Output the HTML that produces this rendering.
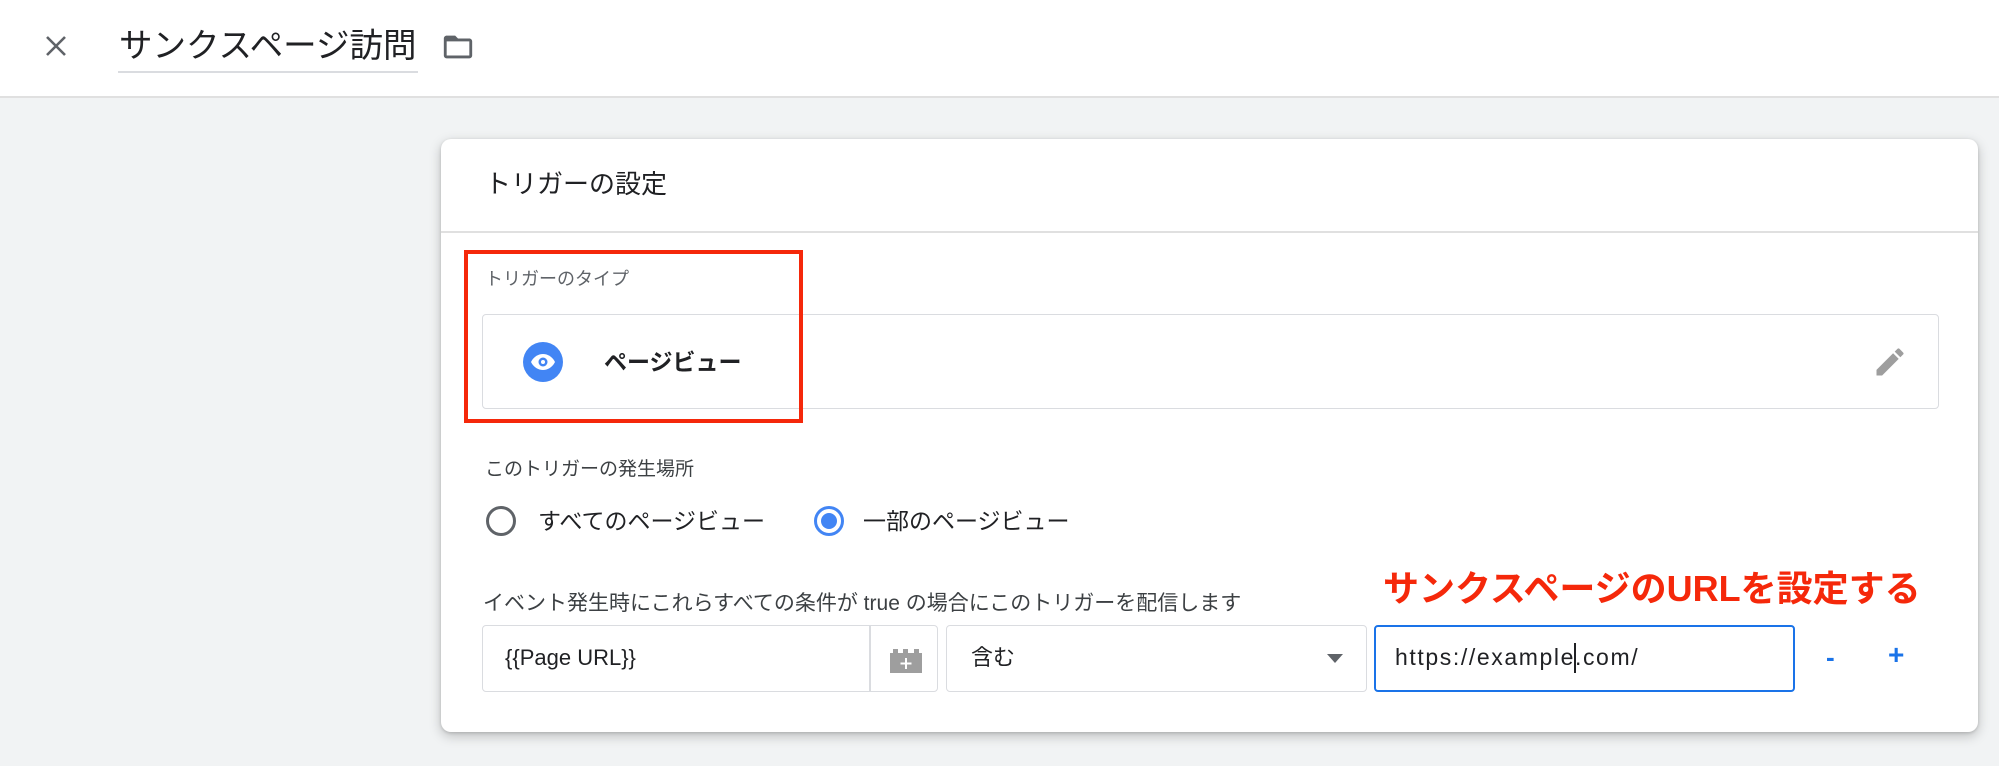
<!DOCTYPE html>
<html><head><meta charset="utf-8"><style>
*{box-sizing:border-box;margin:0;padding:0}
body{width:1999px;height:766px;background:#f1f3f4;font-family:"Liberation Sans","Noto Sans CJK JP",sans-serif;color:#202124;position:relative;overflow:hidden}
.abs{position:absolute}
.hdr{left:0;top:0;width:1999px;height:98px;background:#fff;border-bottom:2px solid #e0e0e0}
.card{left:441px;top:139px;width:1537px;height:593px;background:#fff;border-radius:10px;box-shadow:0 4px 12px rgba(0,0,0,.22),0 1px 3px rgba(0,0,0,.15)}
.box{border:1.5px solid #dadce0;border-radius:4px;background:#fff}
</style></head><body>
<div class="abs hdr"></div>
<svg class="abs" style="left:44px;top:34px" width="24" height="24" viewBox="0 0 24 24"><path d="M3 3L21 21M21 3L3 21" stroke="#5f6368" stroke-width="2.6"/></svg>
<div class="abs" style="left:119px;top:25px;font-size:33.5px;line-height:44px;color:#202124">サンクスページ訪問</div>
<div class="abs" style="left:118px;top:71px;width:300px;height:2px;background:#dadce0"></div>
<svg class="abs" style="left:440px;top:30px" width="36" height="34" viewBox="0 0 24 24"><path d="M10 4H4c-1.1 0-2 .9-2 2v12c0 1.1.9 2 2 2h16c1.1 0 2-.9 2-2V8c0-1.1-.9-2-2-2h-8l-2-2zm10 14H4V8h16v10z" fill="#5f6368"/></svg>

<div class="abs card"></div>
<div class="abs" style="left:485px;top:166px;font-size:26px;line-height:36px">トリガーの設定</div>
<div class="abs" style="left:441px;top:231px;width:1537px;height:2px;background:#e0e0e0"></div>

<div class="abs" style="left:485px;top:267px;font-size:18px;line-height:24px;color:#5f6368">トリガーのタイプ</div>
<div class="abs box" style="left:482px;top:314px;width:1457px;height:95px"></div>
<svg class="abs" style="left:522px;top:341px" width="42" height="42" viewBox="0 0 42 42"><circle cx="21" cy="21" r="20" fill="#4285f4"/><path d="M9 21c3-6 8-8 12-8s9 2 12 8c-3 6-8 8-12 8s-9-2-12-8z" fill="#fff"/><circle cx="21" cy="21" r="4.5" fill="#4285f4"/><circle cx="21" cy="21" r="2" fill="#fff"/></svg>
<div class="abs" style="left:604px;top:346px;font-size:23px;line-height:32px;font-weight:bold">ページビュー</div>
<svg class="abs" style="left:1872px;top:344px" width="36" height="36" viewBox="0 0 24 24"><path d="M3 17.25V21h3.75L17.81 9.94l-3.75-3.75L3 17.25zM20.71 7.04a1 1 0 000-1.41l-2.34-2.34a1 1 0 00-1.41 0l-1.83 1.83 3.75 3.75 1.83-1.83z" fill="#9e9e9e"/></svg>
<div class="abs" style="left:464px;top:250px;width:339px;height:173px;border:4px solid #f5280a"></div>

<div class="abs" style="left:485px;top:457px;font-size:19px;line-height:26px;color:#3c4043">このトリガーの発生場所</div>
<div class="abs" style="left:486px;top:506px;width:30px;height:30px;border:3px solid #5f6368;border-radius:50%"></div>
<div class="abs" style="left:538px;top:505px;font-size:23px;line-height:32px">すべてのページビュー</div>
<div class="abs" style="left:814px;top:506px;width:30px;height:30px;border:3px solid #4285f4;border-radius:50%"></div>
<div class="abs" style="left:821px;top:513px;width:16px;height:16px;background:#4285f4;border-radius:50%"></div>
<div class="abs" style="left:863px;top:505px;font-size:23px;line-height:32px">一部のページビュー</div>

<div class="abs" style="left:483px;top:590px;font-size:21px;line-height:28px;color:#3c4043">イベント発生時にこれらすべての条件が true の場合にこのトリガーを配信します</div>
<div class="abs" style="left:1383px;top:567px;font-size:36px;line-height:44px;font-weight:bold;color:#f5280a">サンクスページのURLを設定する</div>

<div class="abs box" style="left:482px;top:625px;width:456px;height:67px"></div>
<div class="abs" style="left:869px;top:626px;width:1.5px;height:65px;background:#dadce0"></div>
<div class="abs" style="left:505px;top:643px;font-size:22px;line-height:30px">{{Page URL}}</div>
<svg class="abs" style="left:888px;top:649px" width="36" height="24" viewBox="0 0 36 24"><rect x="2" y="4" width="32" height="20" fill="#9e9e9e"/><rect x="5" y="0" width="5" height="5" fill="#9e9e9e"/><rect x="15" y="0" width="5" height="5" fill="#9e9e9e"/><rect x="26" y="0" width="5" height="5" fill="#9e9e9e"/><path d="M18 9v11M12.5 14.5h11" stroke="#fff" stroke-width="2"/></svg>
<div class="abs box" style="left:946px;top:625px;width:421px;height:67px"></div>
<div class="abs" style="left:971px;top:643px;font-size:22px;line-height:30px">含む</div>
<div class="abs" style="left:1327px;top:654px;width:0;height:0;border-left:8px solid transparent;border-right:8px solid transparent;border-top:9px solid #5f6368"></div>
<div class="abs" style="left:1374px;top:625px;width:421px;height:67px;border:2.5px solid #1a73e8;border-radius:4px;background:#fff"></div>
<div class="abs" style="left:1395px;top:642px;font-size:23px;line-height:30px;letter-spacing:1.6px">https://example.com/</div>
<div class="abs" style="left:1574px;top:643px;width:1.5px;height:30px;background:#202124"></div>
<div class="abs" style="left:1826px;top:642px;font-size:26px;line-height:30px;color:#1a73e8;font-weight:bold">-</div>
<div class="abs" style="left:1888px;top:640px;font-size:28px;line-height:30px;color:#1a73e8;font-weight:bold">+</div>
</body></html>
